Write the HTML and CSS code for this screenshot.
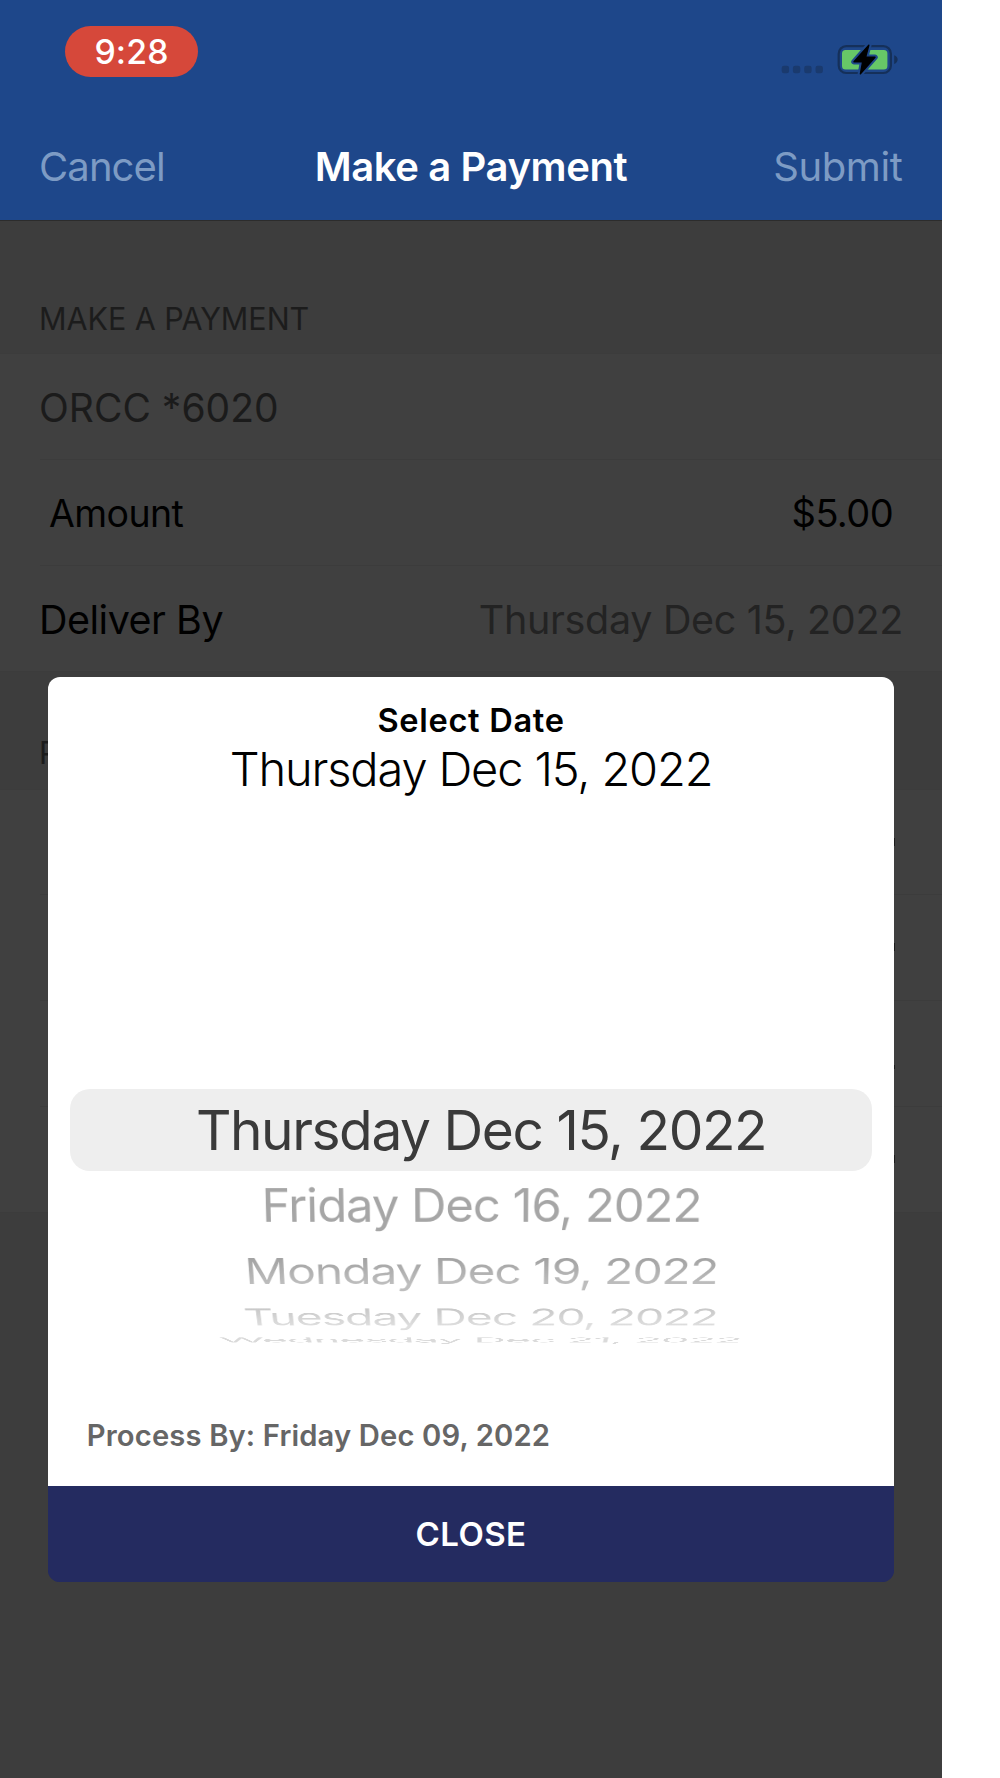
FILE: index.html
```html
<!DOCTYPE html>
<html lang="en">
<head>
<meta charset="utf-8">
<title>Make a Payment</title>
<link rel="stylesheet" href="styles.css">
</head>
<body>
<div class="phone">
  <header class="header">
    <div class="status">
      <span class="time">9:28</span>
      <svg class="indicators" width="130" height="60" viewBox="0 0 130 60" aria-hidden="true">
        <g fill="#1a3a6e">
          <rect x="1.7" y="35.8" width="7.4" height="7.4" rx="2.2"/>
          <rect x="12.9" y="35.8" width="7.4" height="7.4" rx="2.2"/>
          <rect x="24.2" y="35.8" width="7.4" height="7.4" rx="2.2"/>
          <rect x="35.5" y="35.8" width="7.4" height="7.4" rx="2.2"/>
        </g>
        <rect x="58.7" y="16.2" width="52.2" height="26.8" rx="7.5" fill="none" stroke="#15305a" stroke-width="2.2"/>
        <path d="M114.2 25.3c4.6 1.8 4.6 6.8 0 8.8z" fill="#15305a"/>
        <rect x="62" y="20" width="45.4" height="19.6" rx="3.6" fill="#67c767"/>
        <path d="M88.8 15.2 74 31.8h8.6L80.4 43.8 95 27.2h-9.4z" fill="#1e478a" stroke="#1e478a" stroke-width="5.5" stroke-linejoin="round"/>
        <path d="M88.8 15.2 74 31.8h8.6L80.4 43.8 95 27.2h-9.4z" fill="#000" stroke="#000" stroke-width="1.4" stroke-linejoin="round"/>
      </svg>
    </div>
    <nav class="nav">
      <span class="nav-cancel">Cancel</span>
      <h1 class="nav-title">Make a Payment</h1>
      <span class="nav-submit">Submit</span>
    </nav>
  </header>

  <main class="form">
    <h2 class="section-title">MAKE A PAYMENT</h2>
    <div class="rows">
      <div class="row"><span class="account">ORCC *6020</span></div>
      <div class="row"><span class="amount-label">Amount</span><span class="amount">$5.00</span></div>
      <div class="row"><span class="deliver-label">Deliver By</span><span class="deliver-date">Thursday Dec 15, 2022</span></div>
    </div>
    <h2 class="section-title second">P</h2>
    <div class="rows details">
      <div class="row"></div>
      <div class="row"></div>
      <div class="row short"></div>
      <div class="row"></div>
    </div>
  </main>

  <section class="dialog">
    <h3 class="dialog-title">Select Date</h3>
    <p class="dialog-date">Thursday Dec 15, 2022</p>
    <div class="picker">
      <div class="option selected"><span>Thursday Dec 15, 2022</span></div>
      <div class="option near"><span>Friday Dec 16, 2022</span></div>
      <div class="option mid"><span>Monday Dec 19, 2022</span></div>
      <div class="option far"><span>Tuesday Dec 20, 2022</span></div>
      <div class="option edge"><span>Wednesday Dec 21, 2022</span></div>
    </div>
    <p class="process">Process By: Friday Dec 09, 2022</p>
    <button class="close">CLOSE</button>
  </section>
</div>
</body>
</html>
```
FILE: styles.css
```css
* { box-sizing: border-box; }

body {
  margin: 0;
  background: #fff;
  font-family: Inter, "Liberation Sans", sans-serif;
  color: #000;
}

h1, h2, h3, p { margin: 0; font-weight: 400; }

.phone {
  position: relative;
  width: 942px;
  height: 1778px;
  overflow: hidden;
  background: #3d3d3d;
  white-space: nowrap;
}

/* Header */
.header { height: 220px; background: #1e478a; }

.status {
  display: flex;
  justify-content: space-between;
  align-items: flex-start;
  height: 116px;
  padding: 26px 32px 0 65px;
}

.time {
  width: 133px;
  height: 51px;
  border-radius: 26px;
  background: #d6483a;
  color: #fff;
  font-size: 33.8px;
  font-weight: 500;
  line-height: 52px;
  letter-spacing: 0.1px;
  text-align: center;
}

.indicators { margin-top: 4px; }

.nav {
  display: grid;
  grid-template-columns: 1fr auto 1fr;
  align-items: center;
  height: 100px;
  padding: 0 39px;
  font-size: 40px;
  color: #7d9bc4;
}

.nav-cancel { letter-spacing: -0.9px; }
.nav-submit { padding-right: 0.5px; letter-spacing: -0.4px; text-align: right; }
.nav-title { font-size: 40px; font-weight: 600; letter-spacing: -0.4px; color: #fff; }

/* Form behind the dialog */
.form { border-top: 1px solid #2c2c2c; }

.section-title {
  height: 132px;
  padding: 79px 39px 0;
  font-size: 30.5px;
  line-height: 38px;
  letter-spacing: -0.05px;
  color: #1c1c1c;
}

.section-title.second { height: 117px; padding-top: 62px; }

.rows {
  border-top: 1px solid #3c3c3c;
  border-bottom: 1px solid #3c3c3c;
  background: #404040;
}

.row {
  display: flex;
  justify-content: space-between;
  align-items: center;
  height: 106px;
  padding: 2px 39px 0;
}

.row:first-child { height: 105px; }

.row + .row {
  background: linear-gradient(#3c3c3c, #3c3c3c) 40px 0 / 100% 1px no-repeat;
}

.account { font-size: 39px; color: #1b1b1b; }
.amount-label { padding-left: 10px; font-size: 37.5px; letter-spacing: -0.6px; }
.amount { padding-right: 10px; font-size: 38px; letter-spacing: -0.6px; }
.deliver-label { padding-top: 2px; font-size: 39.5px; letter-spacing: -0.5px; }
.deliver-date { padding-top: 2px; font-size: 39.5px; letter-spacing: -0.32px; color: #232323; }

.details .row { justify-content: flex-end; padding: 0 47.5px 0 0; }
.details .row:first-child { height: 104px; }
.details .row::after { content: ""; width: 2px; height: 8px; background: #1c1c1c; }
.details .short::after { height: 4px; margin-top: 28px; }

/* Date dialog */
.dialog {
  position: absolute;
  top: 676.5px;
  left: 48.3px;
  display: flex;
  flex-direction: column;
  width: 845.5px;
  height: 905px;
  overflow: hidden;
  border-radius: 12px;
  background: linear-gradient(#fff 92%, #242b60 92%);
  padding-top: 24.5px;
  text-align: center;
}

.dialog-title { font-size: 32.6px; font-weight: 600; line-height: 39px; letter-spacing: 0.7px; }
.dialog-date { font-size: 47px; font-weight: 300; line-height: 58px; letter-spacing: -1.15px; }

.picker { margin: 291px 22px 0; }

.option {
  display: flex;
  justify-content: center;
  align-items: center;
  padding-left: 20px;
  font-size: 55px;
  line-height: 60px;
  letter-spacing: -1.2px;
}

.selected {
  height: 82px;
  border-radius: 20px;
  background: #eee;
  color: #3a3a3a;
  letter-spacing: -1.42px;
}

.near { height: 68.5px; color: #a6a6a6; }
.mid { height: 62px; }
.far { height: 31px; }
.edge { height: 14px; color: #dadada; }

.mid span, .far span {
  background: linear-gradient(#a2a2a2 20%, #bebebe 80%);
  -webkit-background-clip: text;
  background-clip: text;
  color: transparent;
  padding: 4px 0;
}

.far span { background-image: linear-gradient(#c8c8c8 20%, #dedede 80%); }

/* Each option turns further away, as on a wheel */
.near span { transform: perspective(3000px) rotateX(-19.6deg) scale(0.892); }
.mid span { transform: perspective(3000px) rotateX(-42deg) scale(0.872, 0.875); }
.far span { transform: perspective(3000px) rotateX(-59.7deg) scale(0.841, 0.843); }
.edge span { transform: perspective(3000px) rotateX(-81.2deg) scale(0.82); }

.process {
  margin-top: auto;
  padding-left: 38.5px;
  font-size: 29.2px;
  font-weight: 600;
  line-height: 100px;
  letter-spacing: 0.14px;
  text-align: left;
  color: #666;
}

.close {
  flex: none;
  height: 96px;
  border: 0;
  padding: 0;
  background: #242b60;
  color: #fff;
  font: 600 33px/97px Inter, "Liberation Sans", sans-serif;
  letter-spacing: 0.4px;
}
```
